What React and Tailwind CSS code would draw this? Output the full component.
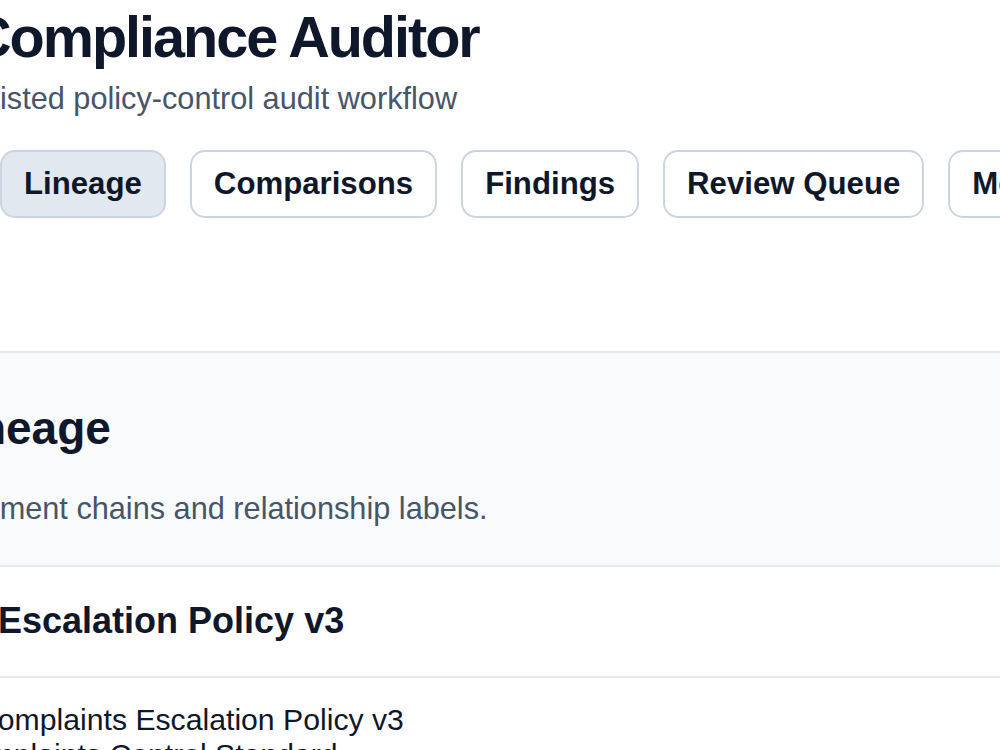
import React from 'react';

const tabs = [
  { id: 'lineage', label: 'Lineage', active: true },
  { id: 'comparisons', label: 'Comparisons' },
  { id: 'findings', label: 'Findings' },
  { id: 'review', label: 'Review Queue' },
  { id: 'monitoring', label: 'Monitoring' },
];

const App = () => {
  return (
    <div className="w-[1000px] h-[750px] overflow-hidden bg-white text-[#0f172a] font-['Liberation_Sans',Arial,sans-serif]">
      {/* Header */}
      <header className="pt-[3px] whitespace-nowrap">
        <h1 className="-ml-[30px] text-[57.6px] leading-[1.2] font-bold tracking-[-0.035em]">
          Compliance Auditor
        </h1>
        <p className="-ml-[87px] mt-[4px] text-[30.7px] leading-[1.5] text-[#475569]">
          AI-assisted policy-control audit workflow
        </p>
      </header>

      {/* Tabs */}
      <nav className="mt-[28px] flex gap-[24px] whitespace-nowrap">
        {tabs.map((tab) => (
          <button
            key={tab.id}
            className={`shrink-0 rounded-[15px] border-2 border-[#cbd5e1] px-[22px] py-[9px] text-[31.2px] leading-[46px] font-bold text-[#0f172a] ${
              tab.active ? 'bg-[#e2e8f0]' : 'bg-white'
            }`}
          >
            {tab.label}
          </button>
        ))}
      </nav>

      {/* Lineage panel */}
      <section className="mt-[133px] whitespace-nowrap">
        <div className="border-y-2 border-[#e2e8f0] bg-[#f8fafc] pt-[48px] pb-[33px]">
          <h2 className="-ml-[63px] text-[46px] leading-[1.2] font-bold">Lineage</h2>
          <p className="-ml-[72px] mt-[30px] text-[30.7px] leading-[1.5] text-[#475569]">
            Document chains and relationship labels.
          </p>
        </div>

        <div className="border-b-2 border-[#e2e8f0] pt-[32px] pb-[33px]">
          <h3 className="-ml-[208px] text-[36px] leading-[1.2] font-bold">
            Complaints Escalation Policy v3
          </h3>
        </div>

        <div className="pt-[24px] text-[30.2px] leading-[35px] text-[#0f172a]">
          <p className="-ml-[24px]">Complaints Escalation Policy v3</p>
          <p className="-ml-[50px]">Complaints Control Standard</p>
        </div>
      </section>
    </div>
  );
};

export default App;
